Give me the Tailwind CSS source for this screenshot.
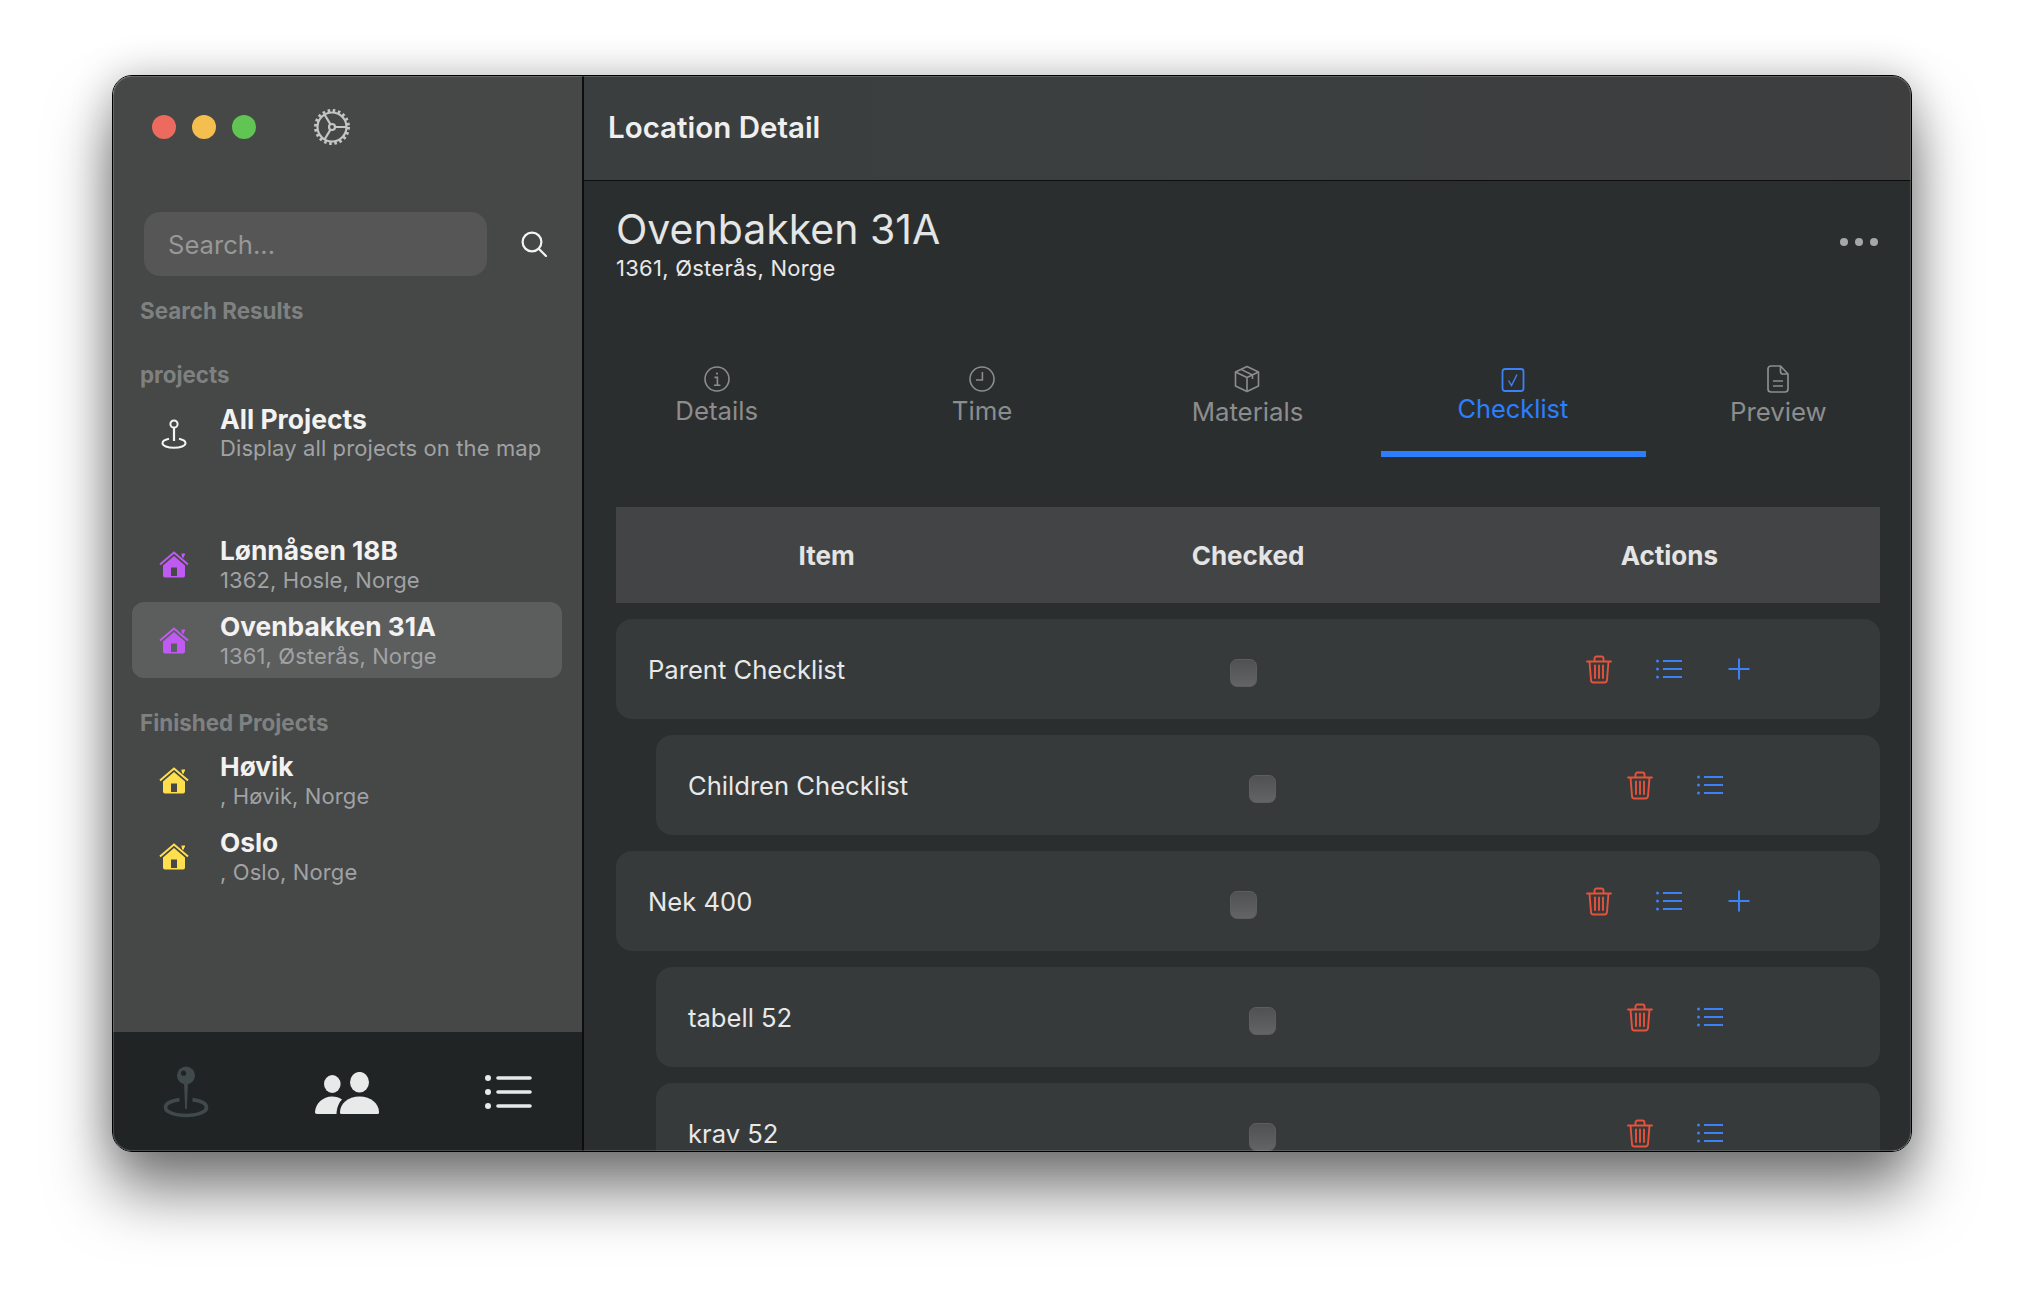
<!DOCTYPE html>
<html lang="nb">
<head>
<meta charset="utf-8">
<title>Location Detail</title>
<script src="https://cdn.jsdelivr.net/npm/@tailwindcss/browser@4"></script>
</head>
<body class="bg-white font-['Inter',sans-serif] antialiased">
<div class="w-[2024px] h-[1300px] pl-[112px] pt-[75px] overflow-hidden">
  <div class="relative w-[1800px] h-[1077px] flex rounded-[20px] border border-black overflow-hidden shadow-[0_40px_62px_rgba(0,0,0,0.5),0_0_40px_rgba(0,0,0,0.22)]">
    <!-- Sidebar -->
    <aside class="w-[471px] shrink-0 flex flex-col bg-[#464747] border-r-2 border-[#0c0d0d]">
      <div class="flex items-center h-[36px] mt-[33px] pl-[39px]">
        <div class="flex gap-4">
          <span class="w-6 h-6 rounded-full bg-[#ed6a5e]"></span>
          <span class="w-6 h-6 rounded-full bg-[#f5bf4f]"></span>
          <span class="w-6 h-6 rounded-full bg-[#61c554]"></span>
        </div>
        <svg class="ml-[58px]" width="36" height="36" viewBox="0 0 36 36" fill="none" stroke="#c4c5c5">
          <circle cx="18" cy="18" r="14.5" stroke-width="2.2"/>
          <circle cx="18" cy="18" r="16.5" stroke-width="3" stroke-dasharray="2.6 2.6"/>
          <circle cx="18" cy="18" r="3" stroke-width="2.2"/>
          <path d="M21 18H32.5M16.5 15.4L10.5 5.5M16.5 20.6L10.5 30.5" stroke-width="2.2"/>
        </svg>
      </div>
      <div class="flex items-center mt-[67px] pl-[31px]">
        <div class="w-[343px] h-[64px] rounded-2xl bg-[#565656] flex items-center pl-[24px] pt-[2px] text-[25.6px] text-[#979898]">Search...</div>
        <svg class="ml-[34px]" width="26" height="26" viewBox="0 0 26 26" fill="none" stroke="#f4f4f4" stroke-width="2.2">
          <circle cx="11" cy="11" r="9.4"/>
          <path d="M18 18L25 25" stroke-linecap="round"/>
        </svg>
      </div>
      <div class="mt-[20px] pl-[27px] h-[30px] leading-[30px] text-[22.4px] font-bold text-[#7f8181]">Search Results</div>
      <div class="mt-[34px] pl-[27px] h-[30px] leading-[30px] text-[22.4px] font-bold text-[#7f8181]">projects</div>

      <div class="mt-[6px] mx-[19px] w-[430px] h-[76px] flex items-center rounded-xl">
        <div class="w-[84px] flex justify-center">
          <svg width="26" height="30" viewBox="0 0 26 30" fill="none" stroke="#f4f4f4" stroke-width="2">
            <circle cx="13" cy="5" r="3.6"/>
            <path d="M13 8.6V22" stroke-width="2.2"/>
            <path d="M8 19.8C4 20.6 1.5 22.2 1.5 24.2C1.5 26.8 6.5 28.8 13 28.8C19.5 28.8 24.5 26.8 24.5 24.2C24.5 22.2 22 20.6 18 19.8"/>
          </svg>
        </div>
        <div class="ml-[4px]">
          <div class="h-[29px] leading-[29px] text-[26.5px] font-bold text-[#f2f2f2]">All Projects</div>
          <div class="h-[29px] leading-[29px] text-[22px] tracking-[0.1px] text-[#a0a2a4]">Display all projects on the map</div>
        </div>
      </div>

      <div class="mt-[54px] mx-[19px] w-[430px] h-[76px] flex items-center rounded-xl">
        <div class="w-[84px] flex justify-center">
          <svg width="30" height="27" viewBox="0 0 30 27" fill="none"><path d="M1 13.5L15 1.5L29 13.5M24 6.5V3.5M22.5 3.5H26" stroke="#bf5af2" stroke-width="2"/><path fill="#bf5af2" fill-rule="evenodd" d="M15 5L26 14.5V24.5a2 2 0 0 1-2 2H6a2 2 0 0 1-2-2V14.5ZM12 16.5H18V25H12Z"/></svg>
        </div>
        <div class="ml-[4px] pt-[2px]">
          <div class="h-[30px] leading-[30px] text-[26.3px] font-bold text-[#f2f2f2]">Lønnåsen 18B</div>
          <div class="h-[29px] leading-[29px] text-[22px] tracking-[0.1px] text-[#a0a2a4]">1362, Hosle, Norge</div>
        </div>
      </div>
      <div class="mx-[19px] w-[430px] h-[76px] flex items-center rounded-xl bg-[#5c5d5d]">
        <div class="w-[84px] flex justify-center">
          <svg width="30" height="27" viewBox="0 0 30 27" fill="none"><path d="M1 13.5L15 1.5L29 13.5M24 6.5V3.5M22.5 3.5H26" stroke="#bf5af2" stroke-width="2"/><path fill="#bf5af2" fill-rule="evenodd" d="M15 5L26 14.5V24.5a2 2 0 0 1-2 2H6a2 2 0 0 1-2-2V14.5ZM12 16.5H18V25H12Z"/></svg>
        </div>
        <div class="ml-[4px] pt-[2px]">
          <div class="h-[30px] leading-[30px] text-[26.3px] font-bold text-[#f2f2f2]">Ovenbakken 31A</div>
          <div class="h-[29px] leading-[29px] text-[22px] tracking-[0.1px] text-[#a0a2a4]">1361, Østerås, Norge</div>
        </div>
      </div>

      <div class="mt-[30px] pl-[27px] h-[30px] leading-[30px] text-[22.4px] font-bold text-[#7f8181]">Finished Projects</div>
      <div class="mt-[4px] mx-[19px] w-[430px] h-[76px] flex items-center rounded-xl">
        <div class="w-[84px] flex justify-center">
          <svg width="30" height="27" viewBox="0 0 30 27" fill="none"><path d="M1 13.5L15 1.5L29 13.5M24 6.5V3.5M22.5 3.5H26" stroke="#ffdf4d" stroke-width="2"/><path fill="#ffdf4d" fill-rule="evenodd" d="M15 5L26 14.5V24.5a2 2 0 0 1-2 2H6a2 2 0 0 1-2-2V14.5ZM12 16.5H18V25H12Z"/></svg>
        </div>
        <div class="ml-[4px] pt-[2px]">
          <div class="h-[30px] leading-[30px] text-[26.3px] font-bold text-[#f2f2f2]">Høvik</div>
          <div class="h-[29px] leading-[29px] text-[22px] tracking-[0.1px] text-[#a0a2a4]">, Høvik, Norge</div>
        </div>
      </div>
      <div class="mx-[19px] w-[430px] h-[76px] flex items-center rounded-xl">
        <div class="w-[84px] flex justify-center">
          <svg width="30" height="27" viewBox="0 0 30 27" fill="none"><path d="M1 13.5L15 1.5L29 13.5M24 6.5V3.5M22.5 3.5H26" stroke="#ffdf4d" stroke-width="2"/><path fill="#ffdf4d" fill-rule="evenodd" d="M15 5L26 14.5V24.5a2 2 0 0 1-2 2H6a2 2 0 0 1-2-2V14.5ZM12 16.5H18V25H12Z"/></svg>
        </div>
        <div class="ml-[4px] pt-[2px]">
          <div class="h-[30px] leading-[30px] text-[26.3px] font-bold text-[#f2f2f2]">Oslo</div>
          <div class="h-[29px] leading-[29px] text-[22px] tracking-[0.1px] text-[#a0a2a4]">, Oslo, Norge</div>
        </div>
      </div>

      <div class="flex-1"></div>
      <nav class="h-[119px] bg-[#212425] relative flex items-center">
        <div class="flex items-start pl-[50px] pt-[1px]">
          <svg width="46" height="52" viewBox="0 0 46 52"><path fill="#414a4b" d="M21 16h4l-1.2 27h-1.6Z"/><circle cx="23" cy="9.5" r="9" fill="#414a4b"/><circle cx="20.5" cy="7.2" r="2.6" fill="#212425"/><path d="M16.5 33.6C8 34.8 2.5 37.6 2.5 41.5C2.5 46 11.5 49.5 23 49.5C34.5 49.5 43.5 46 43.5 41.5C43.5 37.6 38 34.8 29.5 33.6" fill="none" stroke="#414a4b" stroke-width="3.6"/></svg>
          <svg class="ml-[106px] mt-[6px]" width="64" height="42" viewBox="0 0 64 42" fill="#e8eaea"><ellipse cx="44.5" cy="10.2" rx="9.5" ry="10.3"/><ellipse cx="17.3" cy="12" rx="8.3" ry="9"/><path d="M26.5 42C25 42 25 41 25 40C25 32 33 24.5 44.5 24.5C56 24.5 64 32 64 40C64 41 64 42 62.5 42Z"/><path d="M2 42C0.5 42 0 41 0 40C0.5 31.5 8 24.5 17 24.5C21 24.5 24.5 25.6 27 27.5C24 30.5 21.8 35.5 21.5 42Z"/></svg>
          <svg class="ml-[106px] mt-[9px]" width="47" height="34" viewBox="0 0 47 34" fill="#e8eaea" stroke="#e8eaea" stroke-linecap="round"><circle cx="3" cy="3" r="3" stroke="none"/><circle cx="3" cy="17" r="3" stroke="none"/><circle cx="3" cy="31" r="3" stroke="none"/><path d="M13 3H45M13 17H45M13 31H45" stroke-width="3.6"/></svg>
        </div>
      </nav>
    </aside>

    <!-- Main -->
    <main class="flex-1 min-w-0 flex flex-col overflow-hidden bg-[#2b2e2f]">
      <header class="h-[105px] shrink-0 border-b border-[#0c0d0d] bg-gradient-to-r from-[#3a3e3f] via-[#3b3f40] to-[#3e3e3f] flex items-center pl-[24px] pb-[2px] text-[29.5px] font-semibold text-[#efefef]">Location Detail</header>

      <section class="shrink-0 pl-[32px] pr-[33px] pt-[23px] flex justify-between">
        <div>
          <h1 class="h-[50px] leading-[50px] text-[41px] text-[#e4e5e5]">Ovenbakken 31A</h1>
          <p class="h-[28px] leading-[28px] text-[22px] tracking-[0.25px] text-[#e8e8e8]">1361, Østerås, Norge</p>
        </div>
        <div class="flex gap-[7px] pt-[34px]">
          <span class="w-2 h-2 rounded-full bg-[#a6a7a8]"></span>
          <span class="w-2 h-2 rounded-full bg-[#a6a7a8]"></span>
          <span class="w-2 h-2 rounded-full bg-[#a6a7a8]"></span>
        </div>
      </section>

      <div class="shrink-0 mt-[78px] grid grid-cols-5 h-[97px] text-[#8b8d8e] text-[25.8px]">
        <div class="flex flex-col items-center pt-[6px]">
          <svg width="26" height="26" viewBox="0 0 26 26" fill="none" stroke="#8b8d8e" stroke-width="1.6"><circle cx="13" cy="13" r="12"/><circle cx="13" cy="7.6" r="1.1" fill="#8b8d8e" stroke="none"/><path d="M10.5 11.4H13.4V19M10 19.2H16.4"/></svg>
          <span class="mt-[3px] leading-[32px]">Details</span>
        </div>
        <div class="flex flex-col items-center pt-[6px]">
          <svg width="26" height="26" viewBox="0 0 26 26" fill="none" stroke="#8b8d8e" stroke-width="1.6"><circle cx="13" cy="13" r="12"/><path d="M13.4 6V14H7"/></svg>
          <span class="mt-[3px] leading-[32px]">Time</span>
        </div>
        <div class="flex flex-col items-center pt-[5px]">
          <svg width="28" height="28" viewBox="0 0 28 28" fill="none" stroke="#8b8d8e" stroke-width="1.6" stroke-linejoin="round"><path d="M14 1.5L25.5 7V21L14 26.5L2.5 21V7Z"/><path d="M2.5 7L14 12.5L25.5 7M14 12.5V26.5M8 4.4L19.5 10V14"/></svg>
          <span class="mt-[3px] leading-[32px]">Materials</span>
        </div>
        <div class="relative flex flex-col items-center pt-[8px] text-blue-500">
          <svg width="24" height="24" viewBox="0 0 24 24" fill="none" stroke="#3b82f6" stroke-width="1.8"><rect x="1.5" y="1" width="21" height="22" rx="2.5"/><path d="M7.5 12.5L10.5 17.5L16 6.5" stroke-width="1.4"/></svg>
          <span class="mt-[1px] leading-[32px] text-[25.4px]">Checklist</span>
          <span class="absolute left-[1px] right-0 bottom-[0px] h-[6px] bg-blue-500"></span>
        </div>
        <div class="flex flex-col items-center pt-[5px]">
          <svg width="22" height="28" viewBox="0 0 22 28" fill="none" stroke="#8b8d8e" stroke-width="1.7" stroke-linejoin="round"><path d="M13.5 1H4a3 3 0 0 0-3 3V24a3 3 0 0 0 3 3H18a3 3 0 0 0 3-3V9Z"/><path d="M13.5 1V6.5a2.5 2.5 0 0 0 2.5 2.5H21M6 16H16M6 21H16"/></svg>
          <span class="mt-[3px] leading-[32px]">Preview</span>
        </div>
      </div>

      <div class="shrink-0 mt-[50px] ml-[32px] mr-[31px] flex flex-col gap-4">
        <div class="grid grid-cols-3 h-[96px] bg-[#434446] items-center text-center text-[26px] font-bold text-[#e4e4e4]">
          <div>Item</div><div>Checked</div><div>Actions</div>
        </div>

        <div class="pl-[32px] h-[100px] shrink-0 rounded-2xl bg-[#363a3b] grid grid-cols-[582px_27px_1fr] items-center text-[25.6px] text-[#e8e8e8]">
          <div class="pt-[2px]">Parent Checklist</div>
          <div class="w-[27px] h-[28px] mt-[8px] rounded-[7px] bg-gradient-to-b from-[#4f5152] to-[#636565] border border-[#5c5e5f]"></div>
          <div class="flex items-center ml-[307px]">
            <div class="w-[70px] flex justify-center"><svg width="26" height="29" viewBox="0 0 26 29" fill="none" stroke="#e5533d" stroke-width="1.9" stroke-linecap="round" stroke-linejoin="round"><path d="M1 6.5H25M8.5 6.5V3.5a2 2 0 0 1 2-2H15.5a2 2 0 0 1 2 2V6.5M3.5 6.5L5 25a2.5 2.5 0 0 0 2.5 2.5H18.5a2.5 2.5 0 0 0 2.5-2.5L22.5 6.5M9 10.5V23M13 10.5V23M17 10.5V23"/></svg></div>
            <div class="w-[70px] flex justify-center"><svg width="26" height="20" viewBox="0 0 26 20" fill="#3b82f6" stroke="#3b82f6"><circle cx="1.5" cy="2" r="1.5" stroke="none"/><circle cx="1.5" cy="10" r="1.5" stroke="none"/><circle cx="1.5" cy="18" r="1.5" stroke="none"/><path d="M7 2H26M7 10H26M7 18H26" stroke-width="2.1"/></svg></div>
            <div class="w-[70px] flex justify-center"><svg width="22" height="22" viewBox="0 0 22 22" fill="none" stroke="#3b82f6" stroke-width="2"><path d="M11 0.5V21.5M0.5 11H21.5"/></svg></div>
          </div>
        </div>

        <div class="ml-[40px] pl-[32px] h-[100px] shrink-0 rounded-2xl bg-[#363a3b] grid grid-cols-[561px_27px_1fr] items-center text-[25.6px] text-[#e8e8e8]">
          <div class="pt-[2px]">Children Checklist</div>
          <div class="w-[27px] h-[28px] mt-[8px] rounded-[7px] bg-gradient-to-b from-[#4f5152] to-[#636565] border border-[#5c5e5f]"></div>
          <div class="flex items-center ml-[329px]">
            <div class="w-[70px] flex justify-center"><svg width="26" height="29" viewBox="0 0 26 29" fill="none" stroke="#e5533d" stroke-width="1.9" stroke-linecap="round" stroke-linejoin="round"><path d="M1 6.5H25M8.5 6.5V3.5a2 2 0 0 1 2-2H15.5a2 2 0 0 1 2 2V6.5M3.5 6.5L5 25a2.5 2.5 0 0 0 2.5 2.5H18.5a2.5 2.5 0 0 0 2.5-2.5L22.5 6.5M9 10.5V23M13 10.5V23M17 10.5V23"/></svg></div>
            <div class="w-[70px] flex justify-center"><svg width="26" height="20" viewBox="0 0 26 20" fill="#3b82f6" stroke="#3b82f6"><circle cx="1.5" cy="2" r="1.5" stroke="none"/><circle cx="1.5" cy="10" r="1.5" stroke="none"/><circle cx="1.5" cy="18" r="1.5" stroke="none"/><path d="M7 2H26M7 10H26M7 18H26" stroke-width="2.1"/></svg></div>
          </div>
        </div>

        <div class="pl-[32px] h-[100px] shrink-0 rounded-2xl bg-[#363a3b] grid grid-cols-[582px_27px_1fr] items-center text-[25.6px] text-[#e8e8e8]">
          <div class="pt-[2px]">Nek 400</div>
          <div class="w-[27px] h-[28px] mt-[8px] rounded-[7px] bg-gradient-to-b from-[#4f5152] to-[#636565] border border-[#5c5e5f]"></div>
          <div class="flex items-center ml-[307px]">
            <div class="w-[70px] flex justify-center"><svg width="26" height="29" viewBox="0 0 26 29" fill="none" stroke="#e5533d" stroke-width="1.9" stroke-linecap="round" stroke-linejoin="round"><path d="M1 6.5H25M8.5 6.5V3.5a2 2 0 0 1 2-2H15.5a2 2 0 0 1 2 2V6.5M3.5 6.5L5 25a2.5 2.5 0 0 0 2.5 2.5H18.5a2.5 2.5 0 0 0 2.5-2.5L22.5 6.5M9 10.5V23M13 10.5V23M17 10.5V23"/></svg></div>
            <div class="w-[70px] flex justify-center"><svg width="26" height="20" viewBox="0 0 26 20" fill="#3b82f6" stroke="#3b82f6"><circle cx="1.5" cy="2" r="1.5" stroke="none"/><circle cx="1.5" cy="10" r="1.5" stroke="none"/><circle cx="1.5" cy="18" r="1.5" stroke="none"/><path d="M7 2H26M7 10H26M7 18H26" stroke-width="2.1"/></svg></div>
            <div class="w-[70px] flex justify-center"><svg width="22" height="22" viewBox="0 0 22 22" fill="none" stroke="#3b82f6" stroke-width="2"><path d="M11 0.5V21.5M0.5 11H21.5"/></svg></div>
          </div>
        </div>

        <div class="ml-[40px] pl-[32px] h-[100px] shrink-0 rounded-2xl bg-[#363a3b] grid grid-cols-[561px_27px_1fr] items-center text-[25.6px] text-[#e8e8e8]">
          <div class="pt-[2px]">tabell 52</div>
          <div class="w-[27px] h-[28px] mt-[8px] rounded-[7px] bg-gradient-to-b from-[#4f5152] to-[#636565] border border-[#5c5e5f]"></div>
          <div class="flex items-center ml-[329px]">
            <div class="w-[70px] flex justify-center"><svg width="26" height="29" viewBox="0 0 26 29" fill="none" stroke="#e5533d" stroke-width="1.9" stroke-linecap="round" stroke-linejoin="round"><path d="M1 6.5H25M8.5 6.5V3.5a2 2 0 0 1 2-2H15.5a2 2 0 0 1 2 2V6.5M3.5 6.5L5 25a2.5 2.5 0 0 0 2.5 2.5H18.5a2.5 2.5 0 0 0 2.5-2.5L22.5 6.5M9 10.5V23M13 10.5V23M17 10.5V23"/></svg></div>
            <div class="w-[70px] flex justify-center"><svg width="26" height="20" viewBox="0 0 26 20" fill="#3b82f6" stroke="#3b82f6"><circle cx="1.5" cy="2" r="1.5" stroke="none"/><circle cx="1.5" cy="10" r="1.5" stroke="none"/><circle cx="1.5" cy="18" r="1.5" stroke="none"/><path d="M7 2H26M7 10H26M7 18H26" stroke-width="2.1"/></svg></div>
          </div>
        </div>

        <div class="ml-[40px] pl-[32px] h-[100px] shrink-0 rounded-2xl bg-[#363a3b] grid grid-cols-[561px_27px_1fr] items-center text-[25.6px] text-[#e8e8e8]">
          <div class="pt-[2px]">krav 52</div>
          <div class="w-[27px] h-[28px] mt-[8px] rounded-[7px] bg-gradient-to-b from-[#4f5152] to-[#636565] border border-[#5c5e5f]"></div>
          <div class="flex items-center ml-[329px]">
            <div class="w-[70px] flex justify-center"><svg width="26" height="29" viewBox="0 0 26 29" fill="none" stroke="#e5533d" stroke-width="1.9" stroke-linecap="round" stroke-linejoin="round"><path d="M1 6.5H25M8.5 6.5V3.5a2 2 0 0 1 2-2H15.5a2 2 0 0 1 2 2V6.5M3.5 6.5L5 25a2.5 2.5 0 0 0 2.5 2.5H18.5a2.5 2.5 0 0 0 2.5-2.5L22.5 6.5M9 10.5V23M13 10.5V23M17 10.5V23"/></svg></div>
            <div class="w-[70px] flex justify-center"><svg width="26" height="20" viewBox="0 0 26 20" fill="#3b82f6" stroke="#3b82f6"><circle cx="1.5" cy="2" r="1.5" stroke="none"/><circle cx="1.5" cy="10" r="1.5" stroke="none"/><circle cx="1.5" cy="18" r="1.5" stroke="none"/><path d="M7 2H26M7 10H26M7 18H26" stroke-width="2.1"/></svg></div>
          </div>
        </div>
      </div>
    </main>
    <div class="absolute inset-0 rounded-[19px] pointer-events-none shadow-[inset_0_0_0_1px_rgba(255,255,255,0.18)]"></div>
  </div>
</div>
</body>
</html>
